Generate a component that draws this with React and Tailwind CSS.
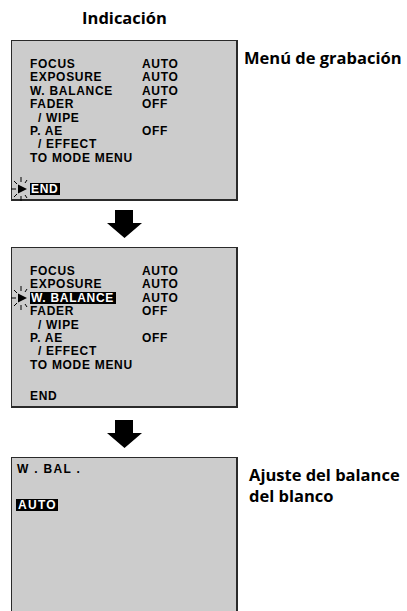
const MENU = [
  { label: 'FOCUS', value: 'AUTO' },
  { label: 'EXPOSURE', value: 'AUTO' },
  { label: 'W. BALANCE', value: 'AUTO' },
  { label: 'FADER', value: 'OFF' },
  { label: '/ WIPE', indent: true },
  { label: 'P. AE', value: 'OFF' },
  { label: '/ EFFECT', indent: true },
  { label: 'TO MODE MENU' },
]

function Cursor() {
  return (
    <svg
      className="absolute left-[-19px] top-1/2 -translate-y-1/2"
      width="20"
      height="24"
      viewBox="0 0 20 24"
    >
      <g stroke="#000" strokeWidth="1" fill="none">
        <line x1="0" y1="12" x2="5" y2="12" />
        <line x1="10" y1="0" x2="10" y2="5" />
        <line x1="10" y1="19" x2="10" y2="24" />
        <line x1="3" y1="4" x2="6" y2="7" />
        <line x1="3" y1="20" x2="6" y2="17" />
        <line x1="16" y1="3" x2="14" y2="6" />
        <line x1="16" y1="21" x2="14" y2="18" />
      </g>
      <polygon points="7,7.5 16,12 7,16.5" fill="#000" />
    </svg>
  )
}

function Hi({ children, cursor }) {
  return (
    <span className="relative inline-block bg-black text-white pl-[1px] pr-[2px] leading-[12px]">
      {cursor && <Cursor />}
      {children}
    </span>
  )
}

function MenuBox({ selected }) {
  return (
    <div className="w-[227px] h-[161px] bg-[#cccccc] border border-[#2a2a2a] border-r-2 border-b-2 pl-[18px] pt-[17px] font-['Liberation_Sans',Arial,sans-serif] font-bold text-[12px] leading-[13.4px] tracking-[0.7px] text-black">
      {MENU.map((m) => (
        <div key={m.label} className="grid grid-cols-[112px_1fr]">
          <div className={m.indent ? 'pl-[8px]' : ''}>
            {selected === m.label ? <Hi cursor>{m.label}</Hi> : m.label}
          </div>
          <div>{m.value}</div>
        </div>
      ))}
      <div className="mt-[18px]">
        {selected === 'END' ? <Hi cursor>END</Hi> : 'END'}
      </div>
    </div>
  )
}

function Arrow() {
  return (
    <div className="w-[227px] flex justify-center">
      <svg width="35" height="28" viewBox="0 0 35 28">
        <polygon points="8,0 26,0 26,13 35,13 17.5,28 0,13 8,13" fill="#000" />
      </svg>
    </div>
  )
}

export default function App() {
  return (
    <div className="w-[407px] h-[611px] bg-white overflow-hidden pl-[11px] font-['Open_Sans','Lato',sans-serif] text-black">
      <div className="w-[227px] h-[40px] pt-[8px] text-center font-bold text-[16.5px] leading-[20px]">
        Indicación
      </div>

      <div className="flex">
        <MenuBox selected="END" />
        <div className="ml-[6px] pt-[8px] font-bold text-[16.5px] leading-[20px] whitespace-nowrap">
          Menú de grabación
        </div>
      </div>

      <div className="pt-[9px] pb-[9px]">
        <Arrow />
      </div>

      <MenuBox selected="W. BALANCE" />

      <div className="pt-[12px] pb-[9px]">
        <Arrow />
      </div>

      <div className="flex">
        <div className="w-[227px] h-[170px] bg-[#cccccc] border border-[#2a2a2a] border-r-2 pl-[4px] pt-[5px] font-['Liberation_Sans',Arial,sans-serif] font-bold text-[12px] leading-[13px] tracking-[1.3px]">
          <div className="pl-[1px]">W . BAL .</div>
          <div className="mt-[23px]">
            <span className="inline-block bg-black text-white pl-[2px] pr-[1px] leading-[12px]">AUTO</span>
          </div>
        </div>
        <div className="ml-[11px] pt-[7px] font-bold text-[16.5px] leading-[21px]">
          Ajuste del balance
          <br />
          del blanco
        </div>
      </div>
    </div>
  )
}
